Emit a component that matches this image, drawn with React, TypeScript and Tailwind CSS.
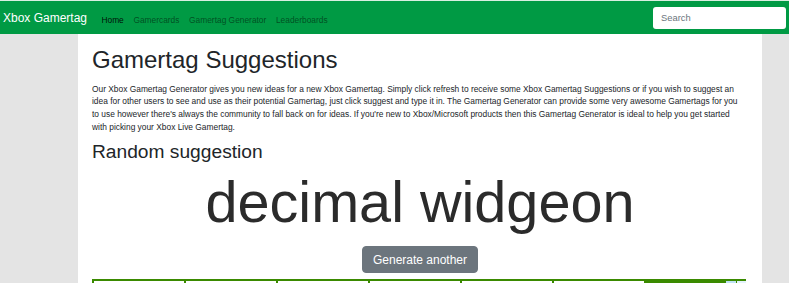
import React from 'react'

const navLinks = ['Home', 'Gamercards', 'Gamertag Generator', 'Leaderboards']

function Navbar() {
  return (
    <nav className="h-[34px] border-t border-[#d9efe1] bg-[#009a44] flex items-center px-[3px]">
      <span className="text-[12px] text-white mr-[9.6px] leading-none">Xbox Gamertag</span>
      <ul className="flex items-center">
        {navLinks.map((link, i) => (
          <li key={link}>
            <a
              href="#"
              className={
                i === 0
                  ? 'px-[4.8px] text-[8.4px] text-black/90'
                  : 'px-[4.8px] text-[8.4px] text-black/50'
              }
            >
              {link}
            </a>
          </li>
        ))}
      </ul>
      <input
        type="text"
        placeholder="Search"
        className="ml-auto w-[133px] h-[22px] rounded-[3px] bg-white px-[8px] text-[9.4px] text-[#495057] placeholder:text-[#6c757d] outline-none"
      />
    </nav>
  )
}

function AdStrip() {
  return (
    <div className="mt-[6px] flex h-[20px]">
      {[0, 1, 2, 3, 4, 5].map((n) => (
        <div key={n} className="w-[92px] border-l-2 border-t-2 border-[#3a8a00]" />
      ))}
      <div className="w-[82px] border-l-2 border-[#3a8a00] bg-[#3a8a00]" />
      <div className="flex w-[20px] border-t-2 border-[#3a8a00]">
        <div className="w-[10px] bg-[#bfe3f5]" />
        <div className="w-[10px] border-l border-[#3a8a00] bg-[#e3f3fb]" />
      </div>
    </div>
  )
}

export default function App() {
  return (
    <div className="min-h-screen bg-[#e4e4e4] font-['Liberation_Sans',Arial,sans-serif] text-[#212529]">
      <Navbar />
      <div className="flex">
        <div className="w-[78px] shrink-0" />
        <main className="w-[684px] shrink-0 bg-white px-[14px] pt-[12px] pb-[20px]">
          <h1 className="text-[24px] leading-[1.2] mb-[8px]">Gamertag Suggestions</h1>
          <p className="text-[8.4px] leading-[1.5] max-w-[652px] mb-[6.6px]">
            Our Xbox Gamertag Generator gives you new ideas for a new Xbox Gamertag. Simply click refresh to
            receive some Xbox Gamertag Suggestions or if you wish to suggest an idea for other users to see and use
            as their potential Gamertag, just click suggest and type it in. The Gamertag Generator can provide some
            very awesome Gamertags for you to use however there's always the community to fall back on for ideas.
            If you're new to Xbox/Microsoft products then this Gamertag Generator is ideal to help you get started
            with picking your Xbox Live Gamertag.
          </p>
          <h2 className="text-[19.2px] leading-[1.2]">Random suggestion</h2>
          <div className="mt-[5px] text-center text-[57.6px] leading-[1.2] font-light text-[#2b2b2b]">
            decimal widgeon
          </div>
          <div className="mt-[9.4px] flex justify-center">
            <button className="h-[27px] rounded-[4px] border border-[#6c757d] bg-[#6c757d] px-[9.6px] text-[12px] text-white">
              Generate another
            </button>
          </div>
          <AdStrip />
        </main>
      </div>
    </div>
  )
}
